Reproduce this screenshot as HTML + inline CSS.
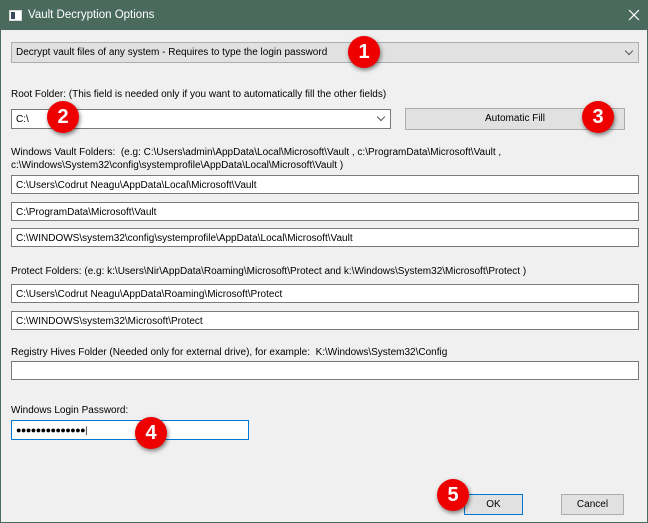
<!DOCTYPE html><html><head><style>
body{margin:0;width:648px;height:523px;overflow:hidden;font-family:"Liberation Sans",sans-serif;font-size:10px;color:#000}
.win{position:absolute;left:0;top:0;width:646px;height:521px;border:1px solid #4a6a5e;background:#f0f0f0}
.title{position:absolute;left:0;top:0;width:646px;height:29px;background:#4a6a5e;color:#fff;font-size:11.5px}
.a{position:absolute}
.tb{position:absolute;background:#fff;border:1px solid #7a7a7a;box-sizing:border-box;padding:4px 4px 0;white-space:nowrap;font-size:10px}
.btn{position:absolute;background:#e1e1e1;border:1px solid #adadad;box-sizing:border-box;text-align:center;line-height:19px}
.b{position:absolute;width:32px;height:32px;border-radius:50%;background:#e00;color:#fff;font-weight:bold;font-size:20px;text-align:center;line-height:32px;box-shadow:1px 2px 4px rgba(0,0,0,.5)}
.chev{position:absolute;right:6px;top:4px;width:5px;height:5px;border-right:1px solid #555;border-bottom:1px solid #555;transform:rotate(45deg)}
</style></head><body><div class="win">
<div class="title"><div class="a" style="left:8px;top:9px;width:11px;height:9px;background:#fff;border:1px solid #ddd"><div class="a" style="left:1px;top:1px;width:4px;height:7px;background:#3a4a58"></div></div><div class="a" style="left:27px;top:8px">Vault Decryption Options</div><svg class="a" style="left:627px;top:8px" width="12" height="12"><path d="M1 1L11 11M11 1L1 11" stroke="#fff" stroke-width="1.2"/></svg></div>
<div class="btn" style="left:10px;top:41px;width:628px;height:21px;text-align:left;padding-left:4px">Decrypt vault files of any system - Requires to type the login password<div class="chev" style="top:5px"></div></div>
<div class="a" style="left:10px;top:88px">Root Folder: (This field is needed only if you want to automatically fill the other fields)</div>
<div class="tb" style="left:10px;top:108px;width:380px;height:20px">C:\<div class="chev"></div></div>
<div class="btn" style="left:404px;top:107px;width:220px;height:22px;line-height:20px">Automatic Fill</div>
<div class="a" style="left:10px;top:145px;line-height:13px">Windows Vault Folders:&nbsp; (e.g: C:\Users\admin\AppData\Local\Microsoft\Vault , c:\ProgramData\Microsoft\Vault ,<br>c:\Windows\System32\config\systemprofile\AppData\Local\Microsoft\Vault )</div>
<div class="tb" style="left:10px;top:174px;width:628px;height:19px">C:\Users\Codrut Neagu\AppData\Local\Microsoft\Vault</div>
<div class="tb" style="left:10px;top:201px;width:628px;height:19px">C:\ProgramData\Microsoft\Vault</div>
<div class="tb" style="left:10px;top:227px;width:628px;height:19px">C:\WINDOWS\system32\config\systemprofile\AppData\Local\Microsoft\Vault</div>
<div class="a" style="left:10px;top:265px">Protect Folders: (e.g: k:\Users\Nir\AppData\Roaming\Microsoft\Protect and k:\Windows\System32\Microsoft\Protect )</div>
<div class="tb" style="left:10px;top:283px;width:628px;height:19px">C:\Users\Codrut Neagu\AppData\Roaming\Microsoft\Protect</div>
<div class="tb" style="left:10px;top:310px;width:628px;height:19px">C:\WINDOWS\system32\Microsoft\Protect</div>
<div class="a" style="left:10px;top:346px">Registry Hives Folder (Needed only for external drive), for example:&nbsp; K:\Windows\System32\Config</div>
<div class="tb" style="left:10px;top:360px;width:628px;height:19px"></div>
<div class="a" style="left:10px;top:404px">Windows Login Password:</div>
<div class="tb" style="left:10px;top:419px;width:238px;height:20px;border-color:#0078d7;font-size:9px;letter-spacing:-0.5px;padding-top:4px">●●●●●●●●●●●●●●|</div>
<div class="btn" style="left:463px;top:493px;width:59px;height:21px;border-color:#0078d7">OK</div>
<div class="btn" style="left:560px;top:493px;width:63px;height:21px">Cancel</div>
<div class="b" style="left:347px;top:35px">1</div>
<div class="b" style="left:46px;top:100px">2</div>
<div class="b" style="left:581px;top:100px">3</div>
<div class="b" style="left:134px;top:416px">4</div>
<div class="b" style="left:436px;top:478px">5</div>
</div></body></html>
